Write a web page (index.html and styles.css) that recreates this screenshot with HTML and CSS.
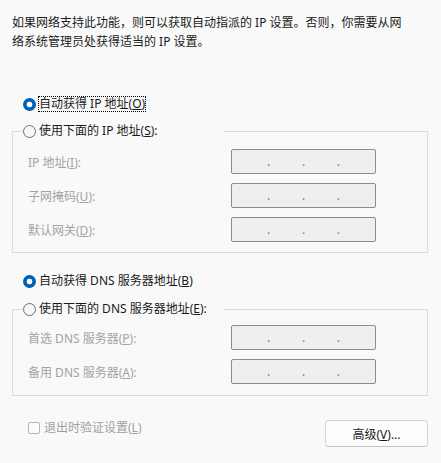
FILE: index.html
```html
<!DOCTYPE html>
<html lang="zh-CN">
<head>
<meta charset="utf-8">
<link rel="stylesheet" href="styles.css">
</head>
<body>
<div class="page">
  <p class="intro">如果网络支持此功能，则可以获取自动指派的 IP 设置。否则，你需要从网<br>络系统管理员处获得适当的 IP 设置。</p>

  <div class="option opt-auto-ip">
    <span class="radio checked"></span>
    <span class="label focus">自动获得 IP 地址(<u>O</u>)</span>
  </div>

  <fieldset class="group group-ip">
    <legend class="option legend">
      <span class="radio"></span>
      <span class="label">使用下面的 IP 地址(<u>S</u>):</span>
    </legend>
    <div class="fields fields-ip">
      <span class="field-label">IP 地址(<u>I</u>):</span>
      <div class="ip"><span>.</span><span>.</span><span>.</span></div>
      <span class="field-label">子网掩码(<u>U</u>):</span>
      <div class="ip"><span>.</span><span>.</span><span>.</span></div>
      <span class="field-label">默认网关(<u>D</u>):</span>
      <div class="ip"><span>.</span><span>.</span><span>.</span></div>
    </div>
  </fieldset>

  <div class="option opt-auto-dns">
    <span class="radio checked"></span>
    <span class="label">自动获得 DNS 服务器地址(<u>B</u>)</span>
  </div>

  <fieldset class="group group-dns">
    <legend class="option legend">
      <span class="radio"></span>
      <span class="label">使用下面的 DNS 服务器地址(<u>E</u>):</span>
    </legend>
    <div class="fields fields-dns">
      <span class="field-label">首选 DNS 服务器(<u>P</u>):</span>
      <div class="ip"><span>.</span><span>.</span><span>.</span></div>
      <span class="field-label">备用 DNS 服务器(<u>A</u>):</span>
      <div class="ip"><span>.</span><span>.</span><span>.</span></div>
    </div>
  </fieldset>

  <div class="footer">
    <div class="check-row">
      <span class="checkbox"></span>
      <span class="check-label">退出时验证设置(<u>L</u>)</span>
    </div>
    <button class="btn">高级(<u>V</u>)...</button>
  </div>
</div>
</body>
</html>
```

FILE: styles.css
```css
html, body {
  margin: 0;
  padding: 0;
  background: #f9f9f9;
}

body {
  font-family: "Noto Sans", "Noto Sans CJK SC", sans-serif;
  font-size: 12px;
  color: #1a1a1a;
}

.page {
  padding: 13px 13px 0 12px;
}

.intro {
  margin: 0;
  line-height: 19px;
}

.option {
  display: flex;
  align-items: center;
  height: 18px;
}

.opt-auto-ip {
  margin-top: 44px;
  padding-left: 11px;
}

.opt-auto-dns {
  margin-top: 19px;
  padding-left: 11px;
}

.radio {
  box-sizing: border-box;
  width: 13px;
  height: 13px;
  border-radius: 50%;
  border: 1px solid #6f6f6f;
  background: #f6f6f6;
  margin-right: 2px;
  flex: none;
}

.radio.checked {
  border: none;
  background: radial-gradient(circle at center, #ffffff 0 2.6px, #005fb8 3.2px);
}

.label {
  line-height: 16px;
  padding: 0 1px;
  white-space: nowrap;
}

.label.focus {
  outline: 1px dotted #000;
  outline-offset: -1px;
}

.group {
  margin: 9px 0 0;
  padding: 0;
  border: 1px solid #dcdcdc;
  min-width: 0;
}

.group-dns {
  margin-top: 10px;
}

.legend {
  margin-left: 10px;
  padding: 0;
  width: 200px;
}

.fields {
  display: grid;
  grid-template-columns: 203px 145px;
  row-gap: 9px;
  align-items: center;
  padding: 9px 0 10px 15px;
}

.fields-dns {
  padding-top: 7px;
  padding-bottom: 11px;
}

.field-label {
  color: #a3a3a3;
  white-space: nowrap;
}

.ip {
  box-sizing: border-box;
  height: 25px;
  background: #efefef;
  border: 1px solid #8c8c8c;
  border-radius: 2px;
  display: flex;
  justify-content: space-between;
  align-items: center;
  padding: 0 35px 0 35px;
  color: #7a7a7a;
  line-height: 12px;
}

.footer {
  display: flex;
  justify-content: space-between;
  align-items: flex-start;
  margin-top: 25px;
  padding-left: 16px;
}

.check-row {
  display: flex;
  align-items: center;
  height: 14px;
}

.checkbox {
  box-sizing: border-box;
  width: 12px;
  height: 12px;
  border: 1px solid #b8b8b8;
  border-radius: 2px;
  background: #fafafa;
  margin-right: 4px;
}

.check-label {
  color: #a0a0a0;
  line-height: 14px;
}

.btn {
  box-sizing: border-box;
  width: 103px;
  height: 27px;
  margin-top: -1px;
  background: #fdfdfd;
  border: 1px solid #d4d4d4;
  border-bottom-color: #c4c4c4;
  border-radius: 4px;
  font-family: "Noto Sans", "Noto Sans CJK SC", sans-serif;
  font-size: 12px;
  color: #1a1a1a;
  padding: 0;
}
```
